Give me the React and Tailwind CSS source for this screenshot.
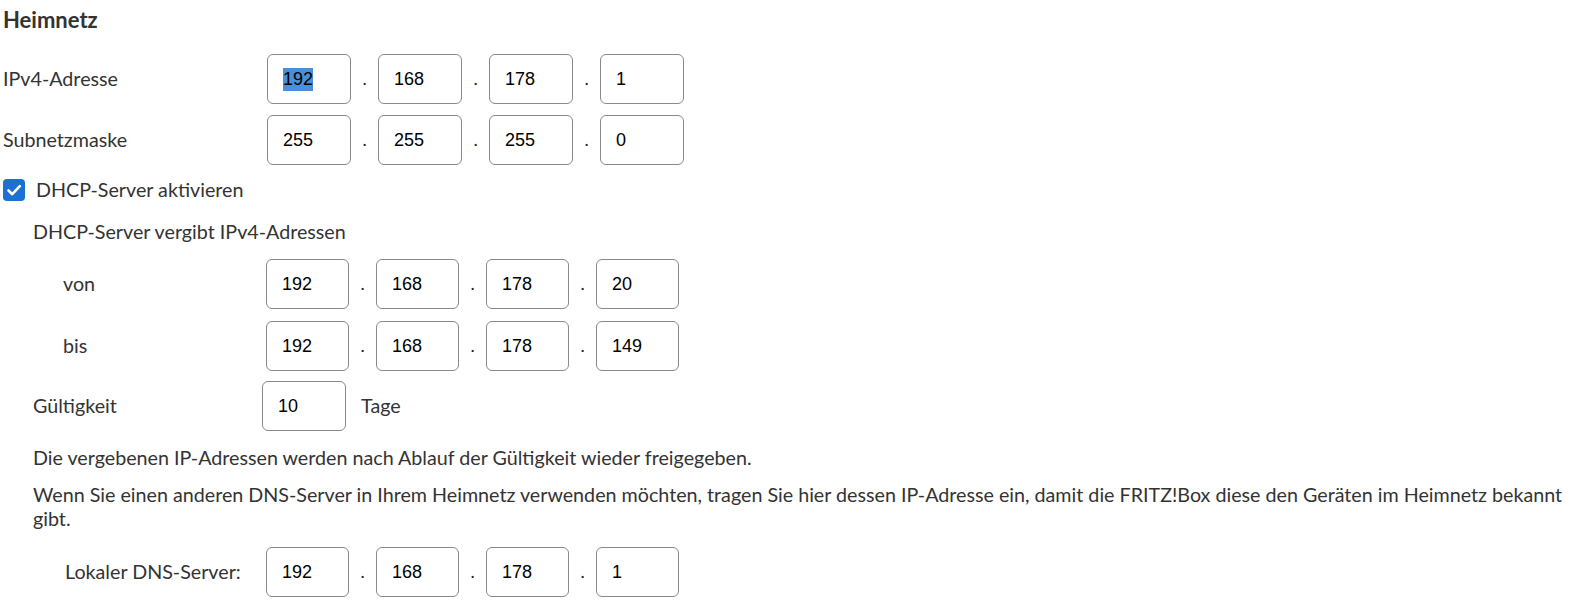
import React from "react";

const labelFont = { fontFamily: "Lato, 'Noto Sans', sans-serif" };

function Octet({ value, selected, w = "w-[84px]" }) {
  return (
    <div className={`${w} h-[50px] shrink-0 rounded-[6px] border border-[#8a8a8a] bg-white pl-[15px] flex items-center text-[18px] text-black font-['Liberation_Sans',Arial,sans-serif]`}>
      {selected ? <span className="bg-[#4a8fd8] leading-[23px]">{value}</span> : <span>{value}</span>}
    </div>
  );
}

function Dot() {
  return <div className="w-[27px] shrink-0 flex justify-center items-end pb-[12px] h-[50px] text-[18px] text-[#222]">.</div>;
}

function IpRow({ label, values, labelClass, boxW, selectFirst }) {
  return (
    <div className="flex items-center h-[50px]">
      <div className={labelClass}>{label}</div>
      <div className="flex items-center">
        {values.map((v, i) => (
          <React.Fragment key={i}>
            {i > 0 && <Dot />}
            <Octet value={v} w={boxW} selected={selectFirst && i === 0} />
          </React.Fragment>
        ))}
      </div>
    </div>
  );
}

export default function App() {
  return (
    <div className="bg-white w-full min-h-[609px] pl-[3px] text-[19.7px] text-[#333]" style={labelFont}>
      <div className="h-[40px] leading-[40px] font-bold text-[22px] text-[#333]">Heimnetz</div>

      <div className="mt-[14px]">
        <IpRow label="IPv4-Adresse" values={["192", "168", "178", "1"]} labelClass="w-[264px] shrink-0" selectFirst />
      </div>
      <div className="mt-[11px]">
        <IpRow label="Subnetzmaske" values={["255", "255", "255", "0"]} labelClass="w-[264px] shrink-0" />
      </div>

      <div className="mt-[10px] h-[30px] flex items-center">
        <svg width="22" height="22" viewBox="0 0 22 22" className="shrink-0">
          <rect x="0" y="0" width="22" height="22" rx="4" fill="#1c70d2" />
          <path d="M5.5 11.5 L9.3 15.2 L16.8 7.2" fill="none" stroke="#fff" strokeWidth="2.6" strokeLinecap="round" strokeLinejoin="round" />
        </svg>
        <span className="ml-[11px]">DHCP-Server aktivieren</span>
      </div>

      <div className="pl-[30px]">
        <div className="mt-[12px] h-[30px] leading-[30px]">DHCP-Server vergibt IPv4-Adressen</div>

        <div className="mt-[12px]">
          <IpRow label="von" values={["192", "168", "178", "20"]} labelClass="w-[233px] shrink-0 pl-[30px]" boxW="w-[83px]" />
        </div>
        <div className="mt-[12px]">
          <IpRow label="bis" values={["192", "168", "178", "149"]} labelClass="w-[233px] shrink-0 pl-[30px]" boxW="w-[83px]" />
        </div>

        <div className="mt-[10px] flex items-center h-[50px]">
          <div className="w-[229px] shrink-0">Gültigkeit</div>
          <Octet value="10" />
          <span className="ml-[15px]">Tage</span>
        </div>

        <p className="mt-[15px] leading-[24px]">Die vergebenen IP-Adressen werden nach Ablauf der Gültigkeit wieder freigegeben.</p>
        <p className="mt-[13px] leading-[24px] max-w-[1550px]">
          Wenn Sie einen anderen DNS-Server in Ihrem Heimnetz verwenden möchten, tragen Sie hier dessen IP-Adresse ein, damit die FRITZ!Box diese den Geräten im Heimnetz bekannt gibt.
        </p>

        <div className="mt-[16px]">
          <IpRow label="Lokaler DNS-Server:" values={["192", "168", "178", "1"]} labelClass="w-[233px] shrink-0 pl-[32px]" boxW="w-[83px]" />
        </div>
      </div>
    </div>
  );
}
